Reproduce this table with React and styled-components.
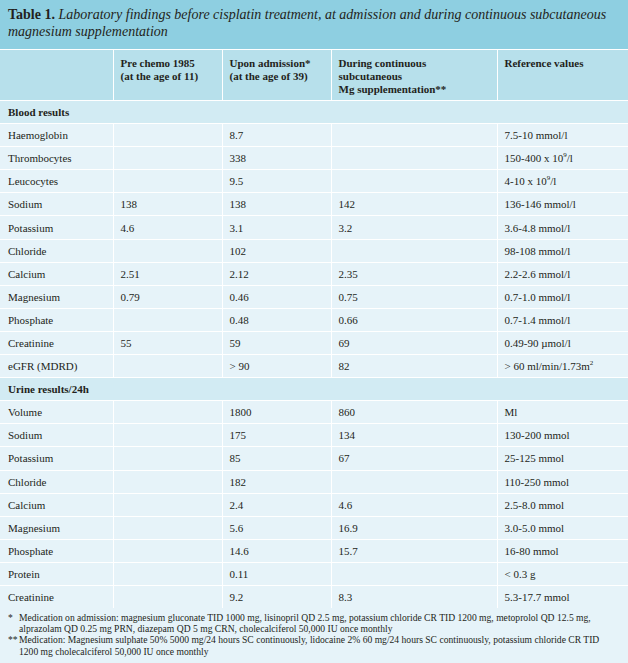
import React from 'react';
import styled, { createGlobalStyle } from 'styled-components';

const GlobalStyle = createGlobalStyle`
  html, body { margin: 0; padding: 0; background: #ffffff; }
  body { font-family: "Liberation Serif", "Times New Roman", serif; color: #231f20; }
`;

const Wrap = styled.div`
  width: 628px;
  min-height: 663px;
  background: #e6f3f9;
`;

const Caption = styled.div`
  background: #8ecfe1;
  padding: 6px 8px 5px 8px;
  font-size: 14px;
  line-height: 17px;
  height: 38px;
  border-bottom: 1px solid #ffffff;
  b { font-style: normal; font-weight: bold; }
  i { font-style: italic; }
`;

const Table = styled.table`
  width: 628px;
  border-collapse: collapse;
  table-layout: fixed;
  font-size: 11px;
`;

const HeadCell = styled.th`
  background: #b7e0eb;
  text-align: left;
  vertical-align: top;
  font-weight: bold;
  line-height: 13px;
  padding: 7px 7px 4px 7px;
  height: 37px;
  border-left: 1px solid #ffffff;
  border-bottom: 1px solid #ffffff;
  &:first-child { border-left: none; }
`;

const SectionCell = styled.td`
  background: #d2ebf3;
  font-weight: bold;
  padding: 0 8px;
  height: 22.1px;
  border-bottom: 1px solid #ffffff;
`;

const Cell = styled.td`
  background: #e6f3f9;
  padding: 0 7px 0 ${p => (p.$first ? 8 : 7)}px;
  height: 22.1px;
  white-space: nowrap;
  border-left: ${p => (p.$first ? 'none' : '1px solid #ffffff')};
  border-bottom: ${p => (p.$last ? 'none' : '1px solid #ffffff')};
`;

const Notes = styled.div`
  padding: 4px 8px 4px 8px;
  font-size: 9.6px;
  line-height: 11.2px;
`;

const Note = styled.div`
  display: flex;
`;

const Mark = styled.span`
  flex: 0 0 11px;
`;

const Sup = styled.sup`
  font-size: 7px;
  line-height: 0;
`;

const blood = [
  ['Haemoglobin', '', '8.7', '', '7.5-10 mmol/l'],
  ['Thrombocytes', '', '338', '', <>150-400 x 10<Sup>9</Sup>/l</>],
  ['Leucocytes', '', '9.5', '', <>4-10 x 10<Sup>9</Sup>/l</>],
  ['Sodium', '138', '138', '142', '136-146 mmol/l'],
  ['Potassium', '4.6', '3.1', '3.2', '3.6-4.8 mmol/l'],
  ['Chloride', '', '102', '', '98-108 mmol/l'],
  ['Calcium', '2.51', '2.12', '2.35', '2.2-2.6 mmol/l'],
  ['Magnesium', '0.79', '0.46', '0.75', '0.7-1.0 mmol/l'],
  ['Phosphate', '', '0.48', '0.66', '0.7-1.4 mmol/l'],
  ['Creatinine', '55', '59', '69', '0.49-90 µmol/l'],
  ['eGFR (MDRD)', '', '> 90', '82', <>&gt; 60 ml/min/1.73m<Sup>2</Sup></>],
];

const urine = [
  ['Volume', '', '1800', '860', 'Ml'],
  ['Sodium', '', '175', '134', '130-200 mmol'],
  ['Potassium', '', '85', '67', '25-125 mmol'],
  ['Chloride', '', '182', '', '110-250 mmol'],
  ['Calcium', '', '2.4', '4.6', '2.5-8.0 mmol'],
  ['Magnesium', '', '5.6', '16.9', '3.0-5.0 mmol'],
  ['Phosphate', '', '14.6', '15.7', '16-80 mmol'],
  ['Protein', '', '0.11', '', '< 0.3 g'],
  ['Creatinine', '', '9.2', '8.3', '5.3-17.7 mmol'],
];

function Row({ cells, last }) {
  return (
    <tr>
      {cells.map((c, i) => (
        <Cell key={i} $first={i === 0} $last={last}>{c}</Cell>
      ))}
    </tr>
  );
}

export default function App() {
  return (
    <>
      <GlobalStyle />
      <Wrap>
        <Caption>
          <b>Table 1.</b>{' '}
          <i>Laboratory findings before cisplatin treatment, at admission and during continuous subcutaneous magnesium supplementation</i>
        </Caption>
        <Table>
          <colgroup>
            <col style={{ width: 113 }} />
            <col style={{ width: 109 }} />
            <col style={{ width: 109 }} />
            <col style={{ width: 166 }} />
            <col style={{ width: 131 }} />
          </colgroup>
          <thead>
            <tr>
              <HeadCell></HeadCell>
              <HeadCell>Pre chemo 1985<br />(at the age of 11)</HeadCell>
              <HeadCell>Upon admission*<br />(at the age of 39)</HeadCell>
              <HeadCell>During continuous<br />subcutaneous<br />Mg supplementation**</HeadCell>
              <HeadCell>Reference values</HeadCell>
            </tr>
          </thead>
          <tbody>
            <tr><SectionCell colSpan={5}>Blood results</SectionCell></tr>
            {blood.map((r, i) => <Row key={'b' + i} cells={r} />)}
            <tr><SectionCell colSpan={5}>Urine results/24h</SectionCell></tr>
            {urine.map((r, i) => <Row key={'u' + i} cells={r} last={i === urine.length - 1} />)}
          </tbody>
        </Table>
        <Notes>
          <Note><Mark>*</Mark><span>Medication on admission: magnesium gluconate TID 1000 mg, lisinopril QD 2.5 mg, potassium chloride CR TID 1200 mg, metoprolol QD 12.5 mg, alprazolam QD 0.25 mg PRN, diazepam QD 5 mg CRN, cholecalciferol 50,000 IU once monthly</span></Note>
          <Note><Mark>**</Mark><span>Medication: Magnesium sulphate 50% 5000 mg/24 hours SC continuously, lidocaine 2% 60 mg/24 hours SC continuously, potassium chloride CR TID 1200 mg cholecalciferol 50,000 IU once monthly</span></Note>
        </Notes>
      </Wrap>
    </>
  );
}
